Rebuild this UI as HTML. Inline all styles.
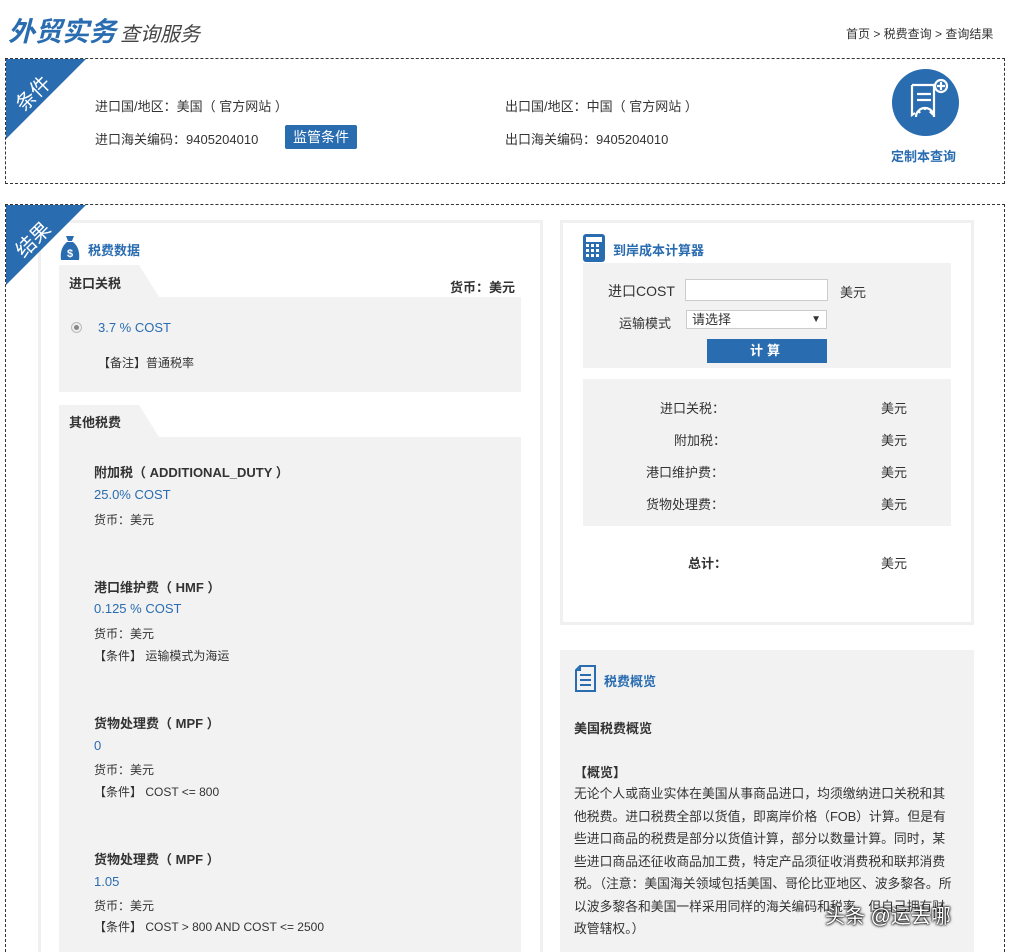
<!DOCTYPE html><html><head><meta charset="utf-8"><style>
*{margin:0;padding:0;box-sizing:border-box}
html,body{width:1010px;height:952px;overflow:hidden}
body{background:#fff;font-family:"Liberation Sans","Noto Sans CJK SC",sans-serif;font-size:13px;color:#333;position:relative}
.a{position:absolute;white-space:nowrap}
.blue{color:#2a6cb0}
.dash{position:absolute;border:1px dashed #333}
.corner{position:absolute;width:0;height:0;border-top:80px solid #2a6cb0;border-right:80px solid transparent}
.g{position:absolute;background:#f2f2f2}
.b{font-weight:bold}
</style></head><body>
<div class="a" style="left:8px;top:10px;font-size:27px;font-weight:bold;font-style:italic;color:#2a6cb0">外贸实务</div>
<div class="a" style="left:120px;top:18px;font-size:20px;font-style:italic;color:#444">查询服务</div>
<div class="a" style="left:846px;top:25px;font-size:12px">首页 &gt; 税费查询 &gt; 查询结果</div>

<div class="dash" style="left:5px;top:58px;width:1000px;height:126px"></div>
<div class="a" style="left:95px;top:96px">进口国/地区：美国（ 官方网站 ）</div>
<div class="a" style="left:95px;top:129px">进口海关编码：9405204010</div>
<div class="a" style="left:285px;top:125px;width:72px;height:24px;background:#2a6cb0;color:#fff;text-align:center;line-height:24px;font-size:14px;border-radius:2px">监管条件</div>
<div class="a" style="left:505px;top:96px">出口国/地区：中国（ 官方网站 ）</div>
<div class="a" style="left:505px;top:129px">出口海关编码：9405204010</div>
<div class="a" style="left:892px;top:69px;width:67px;height:67px;border-radius:50%;background:#2a6cb0"></div>
<svg class="a" style="left:892px;top:69px" width="67" height="67" viewBox="0 0 67 67" fill="none" stroke="#fff" stroke-width="2.2"><path d="M20 16h22v30l-3-2M20 16v30l3-2"/><path d="M25 25h14M25 31h14"/><circle cx="49" cy="17" r="6"/><path d="M49 13v8M45 17h8"/><path d="M24 48a9 9 0 0 1 18 0M28 44l-2-3M38 44l2-3M33 41v-3"/></svg>
<div class="a b blue" style="left:891px;top:146px">定制本查询</div>

<div class="dash" style="left:5px;top:204px;width:1000px;height:748px;border-bottom:none"></div>

<div class="a" style="left:38px;top:220px;width:505px;height:732px;border:3px solid #f0f0f0;border-bottom:none"></div>
<svg class="a" style="left:60px;top:234px" width="20" height="28" viewBox="0 0 20 28"><path d="M6 2h8l-2 5h-4z" fill="#2a6cb0"/><path d="M7 8h6c5 4 7 10 6 18H1C0 18 2 12 7 8z" fill="#2a6cb0"/><text x="10" y="23" font-size="11" fill="#fff" text-anchor="middle" font-weight="bold">$</text></svg>
<div class="a b blue" style="left:88px;top:240px">税费数据</div>
<div class="g" style="left:59px;top:265px;width:80px;height:32px"></div>
<div class="a" style="left:139px;top:265px;width:0;height:0;border-bottom:32px solid #f2f2f2;border-right:20px solid transparent"></div>
<div class="a b" style="left:69px;top:273px">进口关税</div>
<div class="a b" style="left:450px;top:277px">货币：美元</div>
<div class="g" style="left:59px;top:297px;width:462px;height:95px"></div>
<div class="a" style="left:71px;top:322px;width:11px;height:11px;border-radius:50%;border:1px solid #bbb;background:#eee"></div>
<div class="a" style="left:74px;top:325px;width:5px;height:5px;border-radius:50%;background:#888"></div>
<div class="a blue" style="left:98px;top:320px">3.7 % COST</div>
<div class="a" style="left:98px;top:354px;font-size:12px">【备注】普通税率</div>

<div class="g" style="left:59px;top:405px;width:80px;height:32px"></div>
<div class="a" style="left:139px;top:405px;width:0;height:0;border-bottom:32px solid #f2f2f2;border-right:20px solid transparent"></div>
<div class="a b" style="left:69px;top:412px">其他税费</div>
<div class="g" style="left:59px;top:437px;width:462px;height:515px"></div>
<div class="a b" style="left:94px;top:462px">附加税（ ADDITIONAL_DUTY ）</div>
<div class="a blue" style="left:94px;top:487px">25.0% COST</div>
<div class="a" style="left:94px;top:511px;font-size:12px">货币：美元</div>
<div class="a b" style="left:94px;top:577px">港口维护费（ HMF ）</div>
<div class="a blue" style="left:94px;top:601px">0.125 % COST</div>
<div class="a" style="left:94px;top:625px;font-size:12px">货币：美元</div>
<div class="a" style="left:94px;top:647px;font-size:12px">【条件】 运输模式为海运</div>
<div class="a b" style="left:94px;top:713px">货物处理费（ MPF ）</div>
<div class="a blue" style="left:94px;top:738px">0</div>
<div class="a" style="left:94px;top:761px;font-size:12px">货币：美元</div>
<div class="a" style="left:94px;top:783px;font-size:12px">【条件】 COST &lt;= 800</div>
<div class="a b" style="left:94px;top:849px">货物处理费（ MPF ）</div>
<div class="a blue" style="left:94px;top:874px">1.05</div>
<div class="a" style="left:94px;top:897px;font-size:12px">货币：美元</div>
<div class="a" style="left:94px;top:918px;font-size:12px">【条件】 COST &gt; 800 AND COST &lt;= 2500</div>

<div class="a" style="left:560px;top:220px;width:414px;height:405px;border:3px solid #f0f0f0"></div>
<svg class="a" style="left:583px;top:234px" width="22" height="28" viewBox="0 0 22 28"><rect x="0" y="0" width="22" height="28" rx="3" fill="#2a6cb0"/><rect x="3" y="3" width="16" height="5" fill="#fff"/><g fill="#fff"><rect x="3" y="10" width="3" height="3"/><rect x="8" y="10" width="3" height="3"/><rect x="13" y="10" width="3" height="3"/><rect x="3" y="15" width="3" height="3"/><rect x="8" y="15" width="3" height="3"/><rect x="13" y="15" width="3" height="3"/><rect x="3" y="20" width="3" height="3"/><rect x="8" y="20" width="3" height="3"/><rect x="13" y="20" width="3" height="3"/></g></svg>
<div class="a b blue" style="left:613px;top:240px">到岸成本计算器</div>
<div class="g" style="left:583px;top:263px;width:368px;height:105px"></div>
<div class="a" style="left:608px;top:281px;font-size:14px">进口COST</div>
<div class="a" style="left:685px;top:279px;width:143px;height:22px;background:#fff;border:1px solid #ccc"></div>
<div class="a" style="left:840px;top:282px">美元</div>
<div class="a" style="left:619px;top:313px">运输模式</div>
<div class="a" style="left:686px;top:310px;width:141px;height:19px;background:#fff;border:1px solid #ccc;padding-left:5px;line-height:17px">请选择<span style="position:absolute;right:5px;font-size:10px">▼</span></div>
<div class="a b" style="left:707px;top:339px;width:120px;height:24px;background:#2a6cb0;color:#fff;text-align:center;line-height:24px;letter-spacing:4px">计算</div>
<div class="g" style="left:583px;top:379px;width:368px;height:147px"></div>
<div class="a" style="left:660px;top:398px">进口关税：</div>
<div class="a" style="left:674px;top:430px">附加税：</div>
<div class="a" style="left:646px;top:462px">港口维护费：</div>
<div class="a" style="left:646px;top:494px">货物处理费：</div>
<div class="a" style="left:881px;top:398px">美元</div>
<div class="a" style="left:881px;top:430px">美元</div>
<div class="a" style="left:881px;top:462px">美元</div>
<div class="a" style="left:881px;top:494px">美元</div>
<div class="a b" style="left:688px;top:553px">总计：</div>
<div class="a" style="left:881px;top:553px">美元</div>

<div class="g" style="left:560px;top:650px;width:414px;height:302px"></div>
<svg class="a" style="left:575px;top:665px" width="21" height="27" viewBox="0 0 21 27" fill="none" stroke="#2a6cb0" stroke-width="2"><path d="M5 1h15v25H1V5z"/><path d="M5 1v4H1M5 10h11M5 15h11M5 20h11"/></svg>
<div class="a b blue" style="left:604px;top:671px">税费概览</div>
<div class="a b" style="left:574px;top:718px">美国税费概览</div>
<div class="a b" style="left:574px;top:762px">【概览】</div>
<div class="a" style="left:574px;top:783px;width:380px;white-space:normal;line-height:22.5px;font-size:12.8px">无论个人或商业实体在美国从事商品进口，均须缴纳进口关税和其他税费。进口税费全部以货值，即离岸价格（FOB）计算。但是有些进口商品的税费是部分以货值计算，部分以数量计算。同时，某些进口商品还征收商品加工费，特定产品须征收消费税和联邦消费税。（注意：美国海关领域包括美国、哥伦比亚地区、波多黎各。所以波多黎各和美国一样采用同样的海关编码和税率，但自己拥有财政管辖权。）</div>
<div class="a" style="left:825px;top:900px;font-size:20px;color:#fff;text-shadow:0 0 3px #000,0 0 2px #000,0 0 1px #000">头条 @运去哪</div>

<div class="corner" style="left:6px;top:59px"></div>
<div class="a" style="left:12px;top:78px;color:#fff;font-size:20px;transform:rotate(-45deg)">条件</div>
<div class="corner" style="left:6px;top:205px"></div>
<div class="a" style="left:12px;top:224px;color:#fff;font-size:20px;transform:rotate(-45deg)">结果</div>
</body></html>
